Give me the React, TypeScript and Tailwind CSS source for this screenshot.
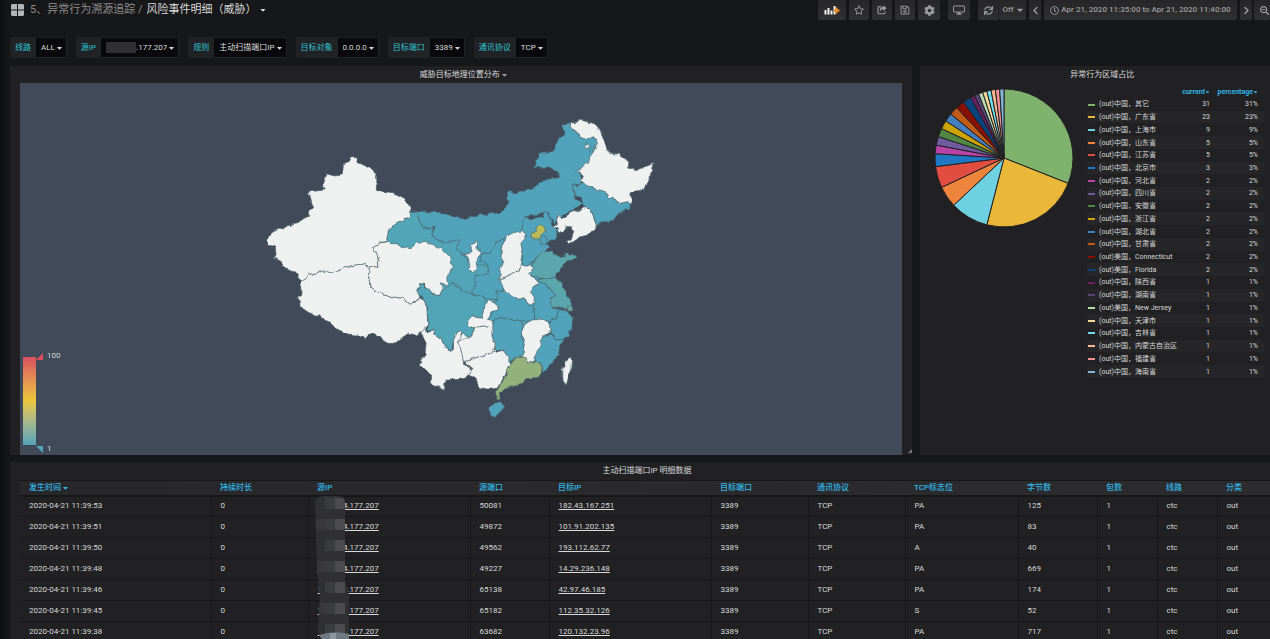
import React from 'react';
import {
  FaCaretDown,
  FaChevronLeft,
  FaChevronRight,
  FaCog,
  FaRegClock,
  FaRegSave,
  FaRegStar,
  FaSearchMinus,
  FaSync,
} from 'react-icons/fa';

interface Filter {
  id: string;
  label: string;
  value: string;
  masked?: boolean;
}

interface Slice {
  label: string;
  value: number;
  color: string;
}

interface Region {
  name: string;
  points: string;
  fill?: string;
}

const EMPTY = '#eef1f0';
const LOW = '#50a3ba';

const filters: Filter[] = [
  { id: 'line', label: '线路', value: 'ALL' },
  { id: 'src', label: '源IP', value: '.177.207', masked: true },
  { id: 'rule', label: '规则', value: '主动扫描端口IP' },
  { id: 'target', label: '目标对象', value: '0.0.0.0' },
  { id: 'port', label: '目标端口', value: '3389' },
  { id: 'proto', label: '通讯协议', value: 'TCP' },
];

const slices: Slice[] = [
  { label: '(out)中国，其它', value: 31, color: '#7EB26D' },
  { label: '(out)中国，广东省', value: 23, color: '#EAB839' },
  { label: '(out)中国，上海市', value: 9, color: '#6ED0E0' },
  { label: '(out)中国，山东省', value: 5, color: '#EF843C' },
  { label: '(out)中国，江苏省', value: 5, color: '#E24D42' },
  { label: '(out)中国，北京市', value: 3, color: '#1F78C1' },
  { label: '(out)中国，河北省', value: 2, color: '#BA43A9' },
  { label: '(out)中国，四川省', value: 2, color: '#705DA0' },
  { label: '(out)中国，安徽省', value: 2, color: '#508642' },
  { label: '(out)中国，浙江省', value: 2, color: '#CCA300' },
  { label: '(out)中国，湖北省', value: 2, color: '#447EBC' },
  { label: '(out)中国，甘肃省', value: 2, color: '#C15C17' },
  { label: '(out)美国，Connecticut', value: 2, color: '#890F02' },
  { label: '(out)美国，Florida', value: 2, color: '#0A437C' },
  { label: '(out)中国，陕西省', value: 1, color: '#6D1F62' },
  { label: '(out)中国，湖南省', value: 1, color: '#584477' },
  { label: '(out)美国，New Jersey', value: 1, color: '#B7DBAB' },
  { label: '(out)中国，天津市', value: 1, color: '#F4D598' },
  { label: '(out)中国，吉林省', value: 1, color: '#70DBED' },
  { label: '(out)中国，内蒙古自治区', value: 1, color: '#F9BA8F' },
  { label: '(out)中国，福建省', value: 1, color: '#F29191' },
  { label: '(out)中国，海南省', value: 1, color: '#82B5D8' },
];

const north: Region[] = [
  {
    name: '内蒙古',
    fill: LOW,
    points:
      '30,303 60,304 130,308 165,322 195,328 235,315 290,310 310,300 328,275 320,260 328,245 350,250 380,238 405,232 420,215 450,206 480,203 470,185 445,170 430,172 400,172 408,155 418,128 440,130 468,112 470,92 495,70 485,45 510,38 515,60 530,65 540,85 575,80 595,90 580,125 570,155 530,185 545,205 540,225 515,222 525,260 545,285 520,300 480,320 470,318 465,345 440,308 380,320 367,350 370,362 310,385 285,400 270,430 240,430 230,390 210,430 190,435 165,415 180,390 150,400 130,402 95,375 105,350 70,355 55,325 50,305',
  },
  {
    name: '吉林',
    fill: LOW,
    points:
      '550,215 570,232 600,240 620,250 625,265 640,260 655,280 680,275 693,283 692,300 675,298 655,310 640,330 620,335 605,335 590,348 580,320 572,295 555,290 545,280 540,262 525,258 522,242 515,225 525,222 530,230',
  },
  {
    name: '黑龙江',
    points:
      '512,37 545,31 585,42 600,60 612,95 625,130 655,132 680,150 688,178 715,178 735,170 762,160 755,185 740,215 730,243 705,240 692,250 695,285 680,275 655,280 640,260 625,265 620,250 600,240 570,232 550,218 540,208 550,200 530,185 545,170 565,160 570,140 580,125 592,95 580,80 570,85 540,85 530,65 510,55',
  },
  {
    name: '河北',
    fill: LOW,
    points:
      '462,350 475,368 468,385 440,400 445,412 430,430 415,435 395,460 390,470 362,465 368,440 360,400 375,380 368,360 368,335 378,318 388,330 410,322 428,320 432,308 440,308 452,330 455,345',
  },
  { name: '天津', fill: LOW, points: '422,385 435,376 440,395 435,408 420,405' },
  { name: '北京', fill: '#b9bc58', points: '408,350 418,343 432,350 434,364 426,374 424,384 405,388 393,380 395,368 408,366' },
  {
    name: '辽宁',
    points:
      '555,290 572,298 580,320 588,348 565,375 540,380 525,392 505,402 503,395 515,385 522,360 515,350 498,350 485,368 462,350 472,340 468,320 475,315 485,325 515,308 545,298',
  },
];

const west: Region[] = [
  {
    name: '甘肃',
    fill: '#52a4b7',
    points:
      '452,213 472,215 480,245 490,265 520,260 515,285 545,310 575,305 600,295 590,330 610,345 625,365 660,375 685,375 685,395 660,408 648,412 650,430 640,460 615,465 600,440 575,430 550,450 480,380 460,330 430,322 378,303 385,270 405,250 430,240 448,235',
  },
  {
    name: '西藏',
    points:
      '125,423 119,435 127,450 124,468 114,472 120,495 130,508 150,520 165,528 180,528 205,545 225,562 250,580 285,585 310,588 315,600 322,583 345,582 362,590 375,610 400,610 420,597 445,580 468,585 485,575 490,580 500,560 503,550 500,505 490,480 478,470 465,490 445,492 430,475 405,472 370,462 345,452 330,438 325,405 328,380 310,372 290,374 260,380 240,390 215,400 195,392 170,398 148,403 135,418',
  },
  {
    name: '新疆',
    points:
      '452,213 448,200 438,185 432,175 415,165 398,158 375,155 350,152 345,140 350,125 349,105 340,90 325,83 310,75 295,68 290,53 272,53 268,66 250,73 248,88 246,105 225,108 200,102 195,118 187,138 192,150 165,153 145,156 152,175 157,200 148,215 149,228 125,240 105,253 80,258 72,270 55,268 35,278 22,297 25,315 45,322 48,345 40,355 60,362 68,380 90,392 108,397 115,415 125,423 135,418 148,403 170,398 195,392 215,400 240,390 260,380 290,374 310,372 328,380 340,380 353,382 352,368 357,352 345,335 337,320 360,310 378,303 385,270 405,250 430,240 448,235',
  },
  {
    name: '青海',
    points:
      '328,380 353,382 352,368 357,352 345,335 337,320 360,310 385,303 400,312 430,320 450,326 460,322 468,305 500,308 530,318 560,340 572,358 577,380 565,405 560,415 562,435 540,427 552,447 545,465 525,462 508,460 495,435 480,430 473,445 478,470 465,490 445,492 430,475 405,472 370,462 345,452 330,438 325,405',
  },
];

const south: Region[] = [
  {
    name: '陕西',
    fill: LOW,
    points:
      '310,-5 312,5 302,25 308,60 300,90 300,118 305,130 312,150 300,152 285,155 292,170 285,180 240,168 215,160 228,130 225,105 240,108 265,95 262,70 240,60 245,40 270,40 280,15',
  },
  {
    name: '四川',
    fill: '#52a4b7',
    points:
      '60,130 75,140 90,158 105,162 122,165 135,145 155,130 180,150 215,162 240,168 262,182 252,205 245,232 215,228 207,238 205,255 220,268 215,285 200,290 180,275 160,300 155,330 140,330 125,300 110,290 98,268 85,275 82,205 68,175 53,160 55,140',
  },
  {
    name: '宁夏',
    points: '228,-2 232,10 230,30 243,40 232,55 228,70 232,85 220,100 208,88 210,65 202,50 190,46 212,38 215,15',
  },
  {
    name: '山西',
    points: '370,-28 375,-5 362,10 367,35 360,75 358,90 330,105 300,117 300,90 308,60 302,25 312,5 320,-12 340,-22',
  },
  {
    name: '湖北',
    fill: LOW,
    points:
      '285,155 312,150 340,172 370,175 385,192 400,200 405,238 380,245 362,240 325,238 300,232 275,245 262,232 280,220 293,205 285,185 292,170',
  },
  {
    name: '安徽',
    fill: LOW,
    points:
      '415,115 420,125 445,140 465,165 450,180 455,200 475,210 470,235 450,245 430,240 405,238 400,200 402,190 402,170 390,155 398,138 415,130 412,118',
  },
  {
    name: '山东',
    fill: '#5ba6ac',
    points:
      '395,75 415,45 435,32 460,30 465,45 478,50 495,45 500,38 530,48 528,58 505,62 490,75 470,100 465,112 440,118 415,112 390,105 385,95 402,82',
  },
  {
    name: '河南',
    points:
      '300,118 330,105 358,90 362,74 375,78 395,78 400,88 388,98 392,108 410,118 415,130 398,138 390,155 402,170 402,190 385,192 370,175 340,172 315,155 305,135',
  },
  {
    name: '江苏',
    fill: '#5ba6ac',
    points:
      '465,112 485,128 492,150 510,180 515,195 500,210 480,205 455,200 450,180 465,165 445,140 420,125 415,115 440,118',
  },
  {
    name: '浙江',
    fill: LOW,
    points: '475,208 500,213 518,235 515,265 505,285 490,300 465,298 450,280 448,250 470,235',
  },
  { name: '上海', fill: '#65a9a0', points: '503,200 515,196 519,212 503,214' },
  {
    name: '福建',
    fill: LOW,
    points:
      '465,298 490,300 478,320 475,345 455,365 440,388 428,397 420,370 405,365 405,345 420,310 430,290 450,285',
  },
  {
    name: '江西',
    points: '370,260 395,240 430,238 448,250 450,280 430,290 412,335 400,368 375,370 368,350 372,310 362,280',
  },
  {
    name: '湖南',
    fill: LOW,
    points:
      '275,245 300,232 325,238 362,242 370,260 362,280 372,310 368,350 345,355 322,368 315,340 312,330 282,332 285,310 275,290 280,275',
  },
  {
    name: '重庆',
    points:
      '265,182 285,190 293,205 275,220 262,235 275,245 275,265 255,258 235,260 225,268 205,255 207,238 215,228 245,232 252,205',
  },
  {
    name: '云南',
    points:
      '75,262 80,278 90,275 98,268 110,290 125,300 135,325 150,332 160,325 160,300 175,270 185,275 182,295 172,305 180,320 188,345 190,370 215,390 205,405 190,415 165,420 135,420 133,452 115,440 90,430 92,405 72,385 57,380 62,360 75,345 78,310 70,290 62,278',
  },
  {
    name: '贵州',
    points:
      '275,265 275,290 285,310 280,335 255,345 220,355 190,365 185,340 180,320 172,305 200,295 215,285 220,268 235,260 255,258',
  },
  {
    name: '广西',
    points:
      '312,330 318,345 330,370 318,395 310,420 290,445 260,448 235,440 228,415 205,405 218,385 195,370 220,355 255,345 280,338',
  },
  {
    name: '广东',
    fill: '#93b17b',
    points:
      '350,352 380,352 378,368 400,370 410,362 422,375 425,395 415,412 385,415 370,428 355,435 320,445 300,455 295,465 300,480 290,478 286,455 310,425 320,400 330,370 340,360',
  },
  { name: '海南', fill: LOW, points: '285,488 305,485 310,498 300,520 285,532 268,522 266,505' },
  { name: '台湾', points: '510,355 517,362 515,385 505,412 498,437 485,410 485,390 495,365' },
];

const columns = [
  { title: '发生时间', width: 'w-[191px]' },
  { title: '持续时长', width: 'w-[97px]' },
  { title: '源IP', width: 'w-[162px]' },
  { title: '源端口', width: 'w-[79px]' },
  { title: '目标IP', width: 'w-[162px]' },
  { title: '目标端口', width: 'w-[97px]' },
  { title: '通讯协议', width: 'w-[97px]' },
  { title: 'TCP标志位', width: 'w-[113px]' },
  { title: '字节数', width: 'w-[79px]' },
  { title: '包数', width: 'w-[60px]' },
  { title: '线路', width: 'w-[60px]' },
  { title: '分类', width: 'w-[53px]' },
];

const rows = [
  { time: '11:39:53', srcPort: '50081', dest: '182.43.167.251', flag: 'PA', bytes: 125 },
  { time: '11:39:51', srcPort: '49872', dest: '101.91.202.135', flag: 'PA', bytes: 83 },
  { time: '11:39:50', srcPort: '49562', dest: '193.112.62.77', flag: 'A', bytes: 40 },
  { time: '11:39:48', srcPort: '49227', dest: '14.29.236.148', flag: 'PA', bytes: 669 },
  { time: '11:39:46', srcPort: '65138', dest: '42.97.46.185', flag: 'PA', bytes: 174 },
  { time: '11:39:45', srcPort: '65182', dest: '112.35.32.126', flag: 'S', bytes: 52 },
  { time: '11:39:38', srcPort: '63682', dest: '120.132.23.96', flag: 'PA', bytes: 717 },
];

const toolButton =
  'flex h-5 items-center justify-center rounded-b-xs bg-linear-to-b from-[#262628] to-[#303033] text-[#9a9b9d]';

const FilterChip: React.FC<{ filter: Filter }> = ({ filter }) => (
  <div className="flex h-[21px] items-stretch rounded-xs bg-[#212226] pr-px">
    <label htmlFor={filter.id} className="flex items-center px-[5px] text-[#2fc4cf]">
      {filter.label}
    </label>
    <div className="my-px flex items-center bg-[#09090b] pr-1 pl-[5px] text-[#d8d9da]">
      {filter.masked && <span className="h-[11px] w-[30px] bg-[#303032]" />}
      <select id={filter.id} className="mr-0.5 appearance-none bg-transparent [field-sizing:content]" defaultValue={filter.value}>
        <option>{filter.value}</option>
      </select>
      <FaCaretDown className="h-2 w-[5px]" />
    </div>
  </div>
);

const Toolbar = () => (
  <div className="flex shrink-0 text-[8px] font-medium">
    <button aria-label="Add panel" className={`${toolButton} mr-[3px] w-7`}>
      <svg viewBox="0 0 16 10" className="h-[10px] w-4">
        <path d="M0.5 5h2v4.500h-2zM3.500 3h2v6.500h-2zM6.500 5.500h2v4h-2zM9.500 1h2v8.500h-2z" fill="#f4f4f4" />
        <path d="M11.500 2.500h2v2h2v2h-2v2h-2v-2h-1.500v-2h1.500z" fill="#f79520" />
      </svg>
    </button>
    <button aria-label="Star" className={`${toolButton} mr-[3px] w-5`}>
      <FaRegStar className="size-[10px]" />
    </button>
    <button aria-label="Share" className={`${toolButton} mr-[3px] w-5`}>
      <svg viewBox="0 0 16 16" className="size-[10px]" fill="none" stroke="currentColor" strokeWidth="1.800">
        <path d="M7 2.500H3.500a2 2 0 0 0-2 2v7.500a2 2 0 0 0 2 2h7.500a2 2 0 0 0 2-2v-2" />
        <path d="M10 0.500l5.500 4.500-5.500 4.500v-2.700C7 6.800 5.500 8 5 11 3.300 6.500 5.500 3.300 10 3.200z" fill="currentColor" stroke="none" />
      </svg>
    </button>
    <button aria-label="Save" className={`${toolButton} mr-[3px] w-5`}>
      <FaRegSave className="size-[10px]" />
    </button>
    <button aria-label="Settings" className={`${toolButton} mr-2 w-[22px]`}>
      <FaCog className="size-[11px]" />
    </button>
    <button aria-label="Cycle view mode" className={`${toolButton} mr-2 w-[22px]`}>
      <svg viewBox="0 0 12 10" className="h-[10px] w-3" fill="none" stroke="currentColor">
        <rect x="0.500" y="1" width="11" height="6" rx="0.500" />
        <path d="M3.500 9h5M6 7v2" strokeWidth="1.500" />
      </svg>
    </button>
    <button aria-label="Refresh" className={`${toolButton} w-[21px] border-r border-[#222224]`}>
      <FaSync className="size-[9px]" />
    </button>
    <button className={`${toolButton} mr-[3px] w-[27px] gap-[3px]`}>
      Off <FaCaretDown className="h-[10px] w-[6px]" />
    </button>
    <button aria-label="Earlier" className={`${toolButton} mr-[3px] w-3`}>
      <FaChevronLeft className="size-[9px]" />
    </button>
    <button className={`${toolButton} mr-[3px] w-[193px] gap-0.5 whitespace-nowrap`}>
      <FaRegClock className="size-[9px]" />
      Apr 21, 2020 11:35:00 to Apr 21, 2020 11:40:00
    </button>
    <button aria-label="Later" className={`${toolButton} mr-0.5 w-3`}>
      <FaChevronRight className="size-[9px]" />
    </button>
    <button aria-label="Zoom out" className={`${toolButton} w-4 pl-1`}>
      <FaSearchMinus className="size-[9px]" />
    </button>
  </div>
);

const drawRegion = (region: Region) => (
  <polygon key={region.name} points={region.points} fill={region.fill ?? EMPTY}>
    <title>{region.name}</title>
  </polygon>
);

const ChinaMap = () => (
  <div className="relative bg-[#404a59]">
    <svg viewBox="-1140 -81 2646 1116" className="h-[372px] w-full" role="img" aria-label="威胁目标地理位置分布">
      <defs>
        {/* roughens borders so that neighbours keep sharing the same edge */}
        <filter id="coast" x="-5%" y="-5%" width="110%" height="110%" colorInterpolationFilters="sRGB">
          <feTurbulence type="fractalNoise" baseFrequency="0.06" numOctaves="1" seed="4" result="noise" />
          <feDisplacementMap in="SourceGraphic" in2="noise" scale="15" xChannelSelector="R" yChannelSelector="G" />
        </filter>
      </defs>
      <g filter="url(#coast)" stroke="#4d676e" strokeWidth="2" strokeLinejoin="round">
        {/* backing under the inland borders */}
        <g stroke="none">
          <polygon points="90,365 210,360 420,375 420,540 450,600 450,660 380,720 290,720 200,660 150,620 130,540" fill={LOW} />
          <polygon points="165,690 195,670 280,650 285,740 200,765" fill={EMPTY} />
        </g>
        <g>{north.map(drawRegion)}</g>
        <path d="M562 88L559 104M577 108L568 128" fill="none" />
        <circle cx="559" cy="110" r="5" fill={EMPTY} />
        <g transform="translate(-420 90)">{west.map(drawRegion)}</g>
        <g transform="translate(0 390)">{south.map(drawRegion)}</g>
      </g>
    </svg>
    <div className="absolute bottom-0 left-[3px] flex text-[8px] leading-[10px] text-[#d8d9da]">
      <div className="mt-[7px] mb-[10px] h-[88px] w-[13px] bg-linear-to-t from-[#50a3ba] via-[#eac736] to-[#d94e5d]" />
      <div className="flex flex-col justify-between pt-px pb-px">
        <span className="flex items-center gap-1">
          <svg viewBox="0 0 7 7" className="size-[7px]">
            <path d="M7 0v7H0z" fill="#d94e5d" />
          </svg>
          100
        </span>
        <span className="flex items-center gap-1">
          <svg viewBox="0 0 7 7" className="size-[7px]">
            <path d="M0 0h7v7z" fill="#50a3ba" />
          </svg>
          1
        </span>
      </div>
    </div>
  </div>
);

const PieChart = () => {
  const total = slices.reduce((sum, slice) => sum + slice.value, 0);
  let start = 0;
  return (
    <svg viewBox="-70 -70 140 140" className="size-[140px] shrink-0" role="img" aria-label="异常行为区域占比">
      {slices.map((slice) => {
        const from = (start / total) * Math.PI * 2;
        start += slice.value;
        const to = (start / total) * Math.PI * 2;
        const r = 69;
        return (
          <path
            key={slice.label}
            d={`M0 0L${r * Math.sin(from)} ${-r * Math.cos(from)}A${r} ${r} 0 0 1 ${r * Math.sin(to)} ${-r * Math.cos(to)}Z`}
            fill={slice.color}
            stroke="#212124"
            strokeWidth="1"
          />
        );
      })}
    </svg>
  );
};

const Legend = () => (
  <table className="h-[293px] w-[177px] shrink-0 text-[7px] leading-[8px] text-[#d8d9da]">
    <thead className="text-[#33b5e5]">
      <tr className="h-[13px]">
        <th />
        <th className="text-right font-bold">
          current
          <FaCaretDown className="inline h-[6px] w-[5px]" />
        </th>
        <th className="w-[54px] pr-[6px] text-right font-bold whitespace-nowrap">
          percentage
          <FaCaretDown className="inline h-[6px] w-[5px]" />
        </th>
      </tr>
    </thead>
    <tbody>
      {slices.map((slice) => (
        <tr key={slice.label} className="even:bg-[#262628]">
          <td className="whitespace-nowrap">
            <span className="mr-1 ml-px inline-block h-0.5 w-[7px] align-middle" style={{ background: slice.color }} />
            {slice.label}
          </td>
          <td className="text-right">{slice.value}</td>
          <td className="pr-[6px] text-right">{slice.value}%</td>
        </tr>
      ))}
    </tbody>
  </table>
);

const mosaic = ['#2f3033', '#39393c', '#2f3033', '#39393c', '#2f3033', '#39393c', '#2f3033'];

const IpMask = () => (
  <svg viewBox="0 0 36 143" className="absolute -top-px left-[5px] z-10 h-[143px] w-9" aria-hidden="true">
    <clipPath id="brush">
      <path d="M1 6Q2 0 10 0H26Q31 1 31 7V84L35 98V143H8Q4 140 4 132L6 100L3 70Z" />
    </clipPath>
    <g clipPath="url(#brush)">
      <rect width="36" height="143" fill="#303033" />
      {mosaic.map((shade, i) => (
        <g key={i}>
          <rect x="2" y={i * 21 + 2} width="9" height="11" fill={shade} />
          <rect x="11" y={i * 21 + 2} width="10" height="11" fill="#3a3b3e" />
          <rect x="21" y={i * 21 + 2} width="10" height="11" fill="#4b4b4e" />
        </g>
      ))}
      <path d="M5 139Q20 134 35 138V143H5z" fill="#6d7880" />
      <rect x="16" y="137" width="6" height="6" fill="#8b979e" />
    </g>
  </svg>
);

const DetailTable = () => (
  <table className="w-full table-fixed text-left text-[8px] leading-[10px] text-[#d8d9da]">
    <colgroup>
      {columns.map((column) => (
        <col key={column.title} className={column.width} />
      ))}
    </colgroup>
    <thead className="border-t border-b-2 border-[#161719] bg-linear-to-r from-[#28282b] to-[#2c2c2f] text-[#33b5e5]">
      <tr className="h-[15px]">
        {columns.map((column, i) => (
          <th key={column.title} className="pl-[9px] font-medium whitespace-nowrap">
            {column.title}
            {i === 0 && <FaCaretDown className="ml-0.5 inline h-2 w-[5px]" />}
          </th>
        ))}
      </tr>
    </thead>
    <tbody>
      {rows.map((row, i) => (
        <tr
          key={row.time}
          className="h-[21px] border-b border-[#161719] *:border-r *:border-[#161719] *:pl-[9px] *:whitespace-nowrap"
        >
          <td>2020-04-21 {row.time}</td>
          <td>0</td>
          <td className="relative">
            {i === 0 && <IpMask />}
            <a href="#source" className="underline">
              1<span className="inline-block w-[21px]" />
              4.177.207
            </a>
          </td>
          <td>{row.srcPort}</td>
          <td>
            <a href="#target" className="underline">
              {row.dest}
            </a>
          </td>
          <td>3389</td>
          <td>TCP</td>
          <td>{row.flag}</td>
          <td>{row.bytes}</td>
          <td>1</td>
          <td>ctc</td>
          <td>out</td>
        </tr>
      ))}
    </tbody>
  </table>
);

export default function App() {
  return (
    <div className="h-screen overflow-hidden bg-[linear-gradient(to_right,#0c0d0f,#161719_9px)] pl-[10px] font-['Roboto','Noto_Sans_CJK_SC',sans-serif] text-[8px] text-[#d8d9da]">
      <header className="flex h-5 items-center justify-between">
        <h1 className="flex items-center pl-px text-[11px] leading-5 text-[#8e8e8e]">
          <svg viewBox="0 0 13 12" className="mr-[6px] h-3 w-[13px]" fill="#b4b5b6" aria-hidden="true">
            <path d="M1 0h5v5.500H0V1zM7 0h5l1 1v4.500H7zM0 6.500h6V12H1l-1-1zM7 6.500h6V11l-1 1H7z" />
          </svg>
          5、异常行为溯源追踪 /
          <button className="ml-1 flex items-center gap-1 text-[#d8d9da]">
            风险事件明细（威胁）
            <FaCaretDown className="h-2 w-[6px]" />
          </button>
        </h1>
        <Toolbar />
      </header>

      <div className="mt-[17px] flex flex-wrap gap-[9px]">
        {filters.map((filter) => (
          <FilterChip key={filter.id} filter={filter} />
        ))}
      </div>

      <main className="mt-2">
        <div className="flex gap-2">
          <section className="relative min-w-0 flex-[901] bg-[#212124] px-[10px]">
            <h2 className="flex h-[17px] items-center justify-center gap-0.5 pl-1">
              威胁目标地理位置分布 <FaCaretDown className="h-2 w-[5px] text-[#9a9b9d]" />
            </h2>
            <ChinaMap />
            <svg viewBox="0 0 4 4" className="absolute right-0 bottom-0.5 size-1" aria-hidden="true">
              <path d="M4 0v4H0z" fill="#77787a" />
            </svg>
          </section>
          <section className="min-w-0 flex-[351] bg-[#212124] pr-[6px]">
            <h2 className="flex h-[17px] items-center justify-center pl-5">异常行为区域占比</h2>
            <div className="flex justify-between pt-0.5 pl-[14px]">
              <div className="pt-[3px]">
                <PieChart />
              </div>
              <Legend />
            </div>
          </section>
        </div>

        <section className="mt-[7px] bg-[#212124] pl-[10px]">
          <h2 className="flex h-[18px] items-center justify-center pl-1">主动扫描端口IP 明细数据</h2>
          <DetailTable />
        </section>
      </main>
    </div>
  );
}
